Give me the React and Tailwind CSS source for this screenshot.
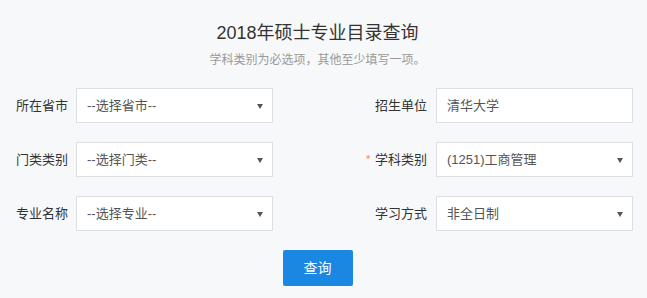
import React from "react";

const font = { fontFamily: '"Liberation Sans", "Noto Sans CJK SC", sans-serif' };

function Arrow() {
  return (
    <svg width="6" height="5" viewBox="0 0 6 5" className="absolute right-[9px] top-[15px]">
      <path d="M0 0 L6 0 L3 5 Z" fill="#555" />
    </svg>
  );
}

function SelectBox({ text }) {
  return (
    <div className="relative w-[197px] h-[35px] bg-white border border-[#dcdfe3] flex items-center pl-[10px] text-[13px] text-[#555] leading-none">
      <span>{text}</span>
      <Arrow />
    </div>
  );
}

function InputBox({ text }) {
  return (
    <div className="w-[197px] h-[35px] bg-white border border-[#dcdfe3] flex items-center pl-[10px] text-[13px] text-[#555] leading-none">
      <span>{text}</span>
    </div>
  );
}

function LeftField({ label, children }) {
  return (
    <div className="flex items-center">
      <div className="w-[60px] text-[13px] text-[#333] leading-none whitespace-nowrap">{label}</div>
      {children}
    </div>
  );
}

function RightField({ label, required, children }) {
  return (
    <div className="flex items-center">
      <div className="relative w-[70px] pr-[9px] text-right text-[13px] text-[#333] leading-none whitespace-nowrap">
        {required && <span className="absolute left-0 top-[1px] text-[#f07c7c] text-[11px] leading-none">*</span>}
        <span>{label}</span>
      </div>
      {children}
    </div>
  );
}

export default function App() {
  return (
    <div className="w-[647px] h-[298px] bg-[#f7f8fa] overflow-hidden" style={font}>
      <div className="flex flex-col items-center pr-[12px] pt-[23px]">
        <div className="text-[18px] leading-[20px] text-[#333]">2018年硕士专业目录查询</div>
        <div className="text-[12px] leading-[14px] text-[#999] mt-[10px]">学科类别为必选项，其他至少填写一项。</div>
      </div>
      <div className="pl-[16px] pr-[14px] mt-[21px] flex flex-col gap-[19px]">
        <div className="flex justify-between">
          <LeftField label="所在省市"><SelectBox text="--选择省市--" /></LeftField>
          <RightField label="招生单位"><InputBox text="清华大学" /></RightField>
        </div>
        <div className="flex justify-between">
          <LeftField label="门类类别"><SelectBox text="--选择门类--" /></LeftField>
          <RightField label="学科类别" required><SelectBox text="(1251)工商管理" /></RightField>
        </div>
        <div className="flex justify-between">
          <LeftField label="专业名称"><SelectBox text="--选择专业--" /></LeftField>
          <RightField label="学习方式"><SelectBox text="非全日制" /></RightField>
        </div>
      </div>
      <div className="flex justify-center pr-[12px] mt-[19px]">
        <button className="w-[70px] h-[36px] bg-[#1a87e2] rounded-[2px] text-white text-[14px] leading-none" style={font}>查询</button>
      </div>
    </div>
  );
}
